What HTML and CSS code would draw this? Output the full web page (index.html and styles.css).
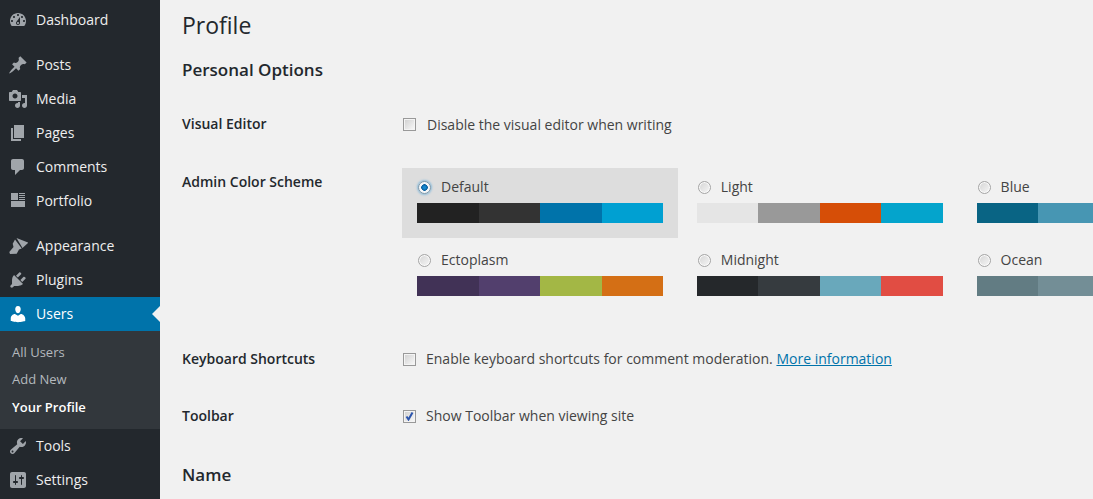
FILE: index.html
```html
<!DOCTYPE html>
<html lang="en">

<head>
    <meta charset="UTF-8">
    <meta name="viewport" content="width=device-width, initial-scale=1.0">
    <title>Profile</title>
    <link rel="stylesheet" href="styles.css">
</head>

<body>
    <nav class="sidebar">
        <ul class="menu">
            <li class="menu-item"><svg class="icon" viewBox="0 0 20 20"><path fill-rule="evenodd" d="M3.76 16h12.48c1.1-1.37 1.76-3.11 1.76-5 0-4.42-3.58-8-8-8s-8 3.58-8 8c0 1.89.66 3.63 1.76 5zM10 4c.55 0 1 .45 1 1s-.45 1-1 1-1-.45-1-1 .45-1 1-1zM6 6c.55 0 1 .45 1 1s-.45 1-1 1-1-.45-1-1 .45-1 1-1zm8 0c.55 0 1 .45 1 1s-.45 1-1 1-1-.45-1-1 .45-1 1-1zm-5.37 5.55L12 7v6c0 1.1-.9 2-2 2s-2-.9-2-2c0-.57.24-1.08.63-1.45zM4 10c.55 0 1 .45 1 1s-.45 1-1 1-1-.45-1-1 .45-1 1-1zm12 0c.55 0 1 .45 1 1s-.45 1-1 1-1-.45-1-1 .45-1 1-1zm-5 3c0-.55-.45-1-1-1s-1 .45-1 1 .45 1 1 1 1-.45 1-1z"/></svg>Dashboard</li>
            <li class="menu-sep"></li>
            <li class="menu-item"><svg class="icon" viewBox="0 0 20 20"><path d="M10.44 3.02l1.82-1.82 6.36 6.35-1.83 1.82c-1.05-.68-2.48-.57-3.41.36l-.75.75c-.92.93-1.04 2.35-.35 3.41l-1.83 1.82-2.41-2.41-2.8 2.79c-.42.42-3.38 2.71-3.8 2.29s1.86-3.39 2.28-3.81l2.79-2.79L4.1 9.36l1.83-1.82c1.05.69 2.48.57 3.4-.36l.75-.75c.93-.92 1.05-2.35.36-3.41z"/></svg>Posts</li>
            <li class="menu-item"><svg class="icon" viewBox="0 0 20 20"><path fill-rule="evenodd" d="M13 11V4c0-.55-.45-1-1-1h-1.67L9 1H5L3.67 3H2c-.55 0-1 .45-1 1v7c0 .55.45 1 1 1h10c.55 0 1-.45 1-1zM7 4.5c1.38 0 2.5 1.12 2.5 2.5S8.38 9.5 7 9.5 4.5 8.38 4.5 7 5.62 4.5 7 4.5zM14 6h5v10.5c0 1.38-1.12 2.5-2.5 2.5S14 17.88 14 16.5s1.12-2.5 2.5-2.500c.17 0 .34.02.5.05V9h-3V6zm-4 8.05V13h2v3.500c0 1.38-1.12 2.5-2.500 2.500S7 17.88 7 16.500 8.120 14 9.500 14c.17 0 .34.020.5.050z"/></svg>Media</li>
            <li class="menu-item"><svg class="icon" viewBox="0 0 20 20"><path d="M6 15V2h10v13H6zm-1 1h8v2H3V5h2v11z"/></svg>Pages</li>
            <li class="menu-item"><svg class="icon" viewBox="0 0 20 20"><path d="M5 2h9c1.1 0 2 .9 2 2v7c0 1.100-.9 2-2 2h-2l-5 5v-5H5c-1.100 0-2-.9-2-2V4c0-1.100.9-2 2-2z"/></svg>Comments</li>
            <li class="menu-item"><svg class="icon" viewBox="0 0 20 20"><path d="M3 2h7v7H3zM11 2h6v1h-6zM11 4h6v1h-6zM11 6h6v1h-6zM11 8h6v1h-6zM3 10h14v6H3z"/></svg>Portfolio</li>
            <li class="menu-sep"></li>
            <li class="menu-item"><svg class="icon" viewBox="0 0 20 20"><path d="M8.500 2l11.800 4.700-5.800 5.300zM7 3.500l6.800 9-2.800 1-2.300 4.200-6.700.3-.7-2 4.200-5-.8-3.300z"/></svg>Appearance</li>
            <li class="menu-item"><svg class="icon" viewBox="0 0 20 20"><path d="M13.11 4.36L9.87 7.6 8 5.73l3.24-3.24c.35-.34 1.05-.2 1.56.32.52.51.66 1.21.31 1.55zm-8 1.77l.91-1.12 9.01 9.01-1.190.84c-.71.71-2.630 1.160-3.820 1.160H6.140L4.900 17.260c-.59.59-1.540.59-2.120 0-.59-.58-.59-1.530 0-2.120l1.240-1.240v-3.880c0-1.130.4-3.050 1.090-3.890zm7.260 3.970l3.240-3.240c.34-.35 1.040-.21 1.550.31.52.51.66 1.210.31 1.550l-3.240 3.250z"/></svg>Plugins</li>
            <li class="menu-item current"><svg class="icon" viewBox="0 0 20 20"><path d="M10 9.25c-2.270 0-2.730-3.440-2.730-3.440C7 4.020 7.820 2 9.970 2c2.160 0 2.980 2.020 2.710 3.810 0 0-.41 3.440-2.680 3.440zm0 2.570L12.720 10c2.390 0 4.520 2.330 4.520 4.530v2.490s-3.650 1.130-7.240 1.130c-3.650 0-7.240-1.130-7.240-1.130v-2.490c0-2.250 1.940-4.480 4.150-4.480z"/></svg>Users</li>
            <li>
                <ul class="submenu">
                    <li>All Users</li>
                    <li>Add New</li>
                    <li class="active">Your Profile</li>
                </ul>
            </li>
            <li class="menu-item"><svg class="icon" viewBox="0 0 20 20"><path fill-rule="evenodd" d="M16.68 9.77c-1.34 1.34-3.3 1.67-4.95.99l-5.41 6.52c-.99.99-2.59.99-3.58 0s-.99-2.59 0-3.57l6.52-5.42c-.68-1.65-.35-3.61.99-4.95 1.28-1.28 3.12-1.62 4.72-1.06l-2.89 2.89 2.82 2.82 2.86-2.87c.53 1.58.18 3.4-1.08 4.65zM3.81 16.21c.4.39 1.04.39 1.43 0 .4-.4.4-1.04 0-1.43-.39-.4-1.03-.4-1.43 0-.39.39-.39 1.03 0 1.43z"/></svg>Tools</li>
            <li class="menu-item"><svg class="icon" viewBox="0 0 20 20"><path fill-rule="evenodd" d="M18 16V4c0-1.100-.9-2-2-2H4c-1.100 0-2 .9-2 2v12c0 1.100.9 2 2 2h12c1.100 0 2-.9 2-2zM8 11h1c.55 0 1 .45 1 1s-.45 1-1 1H8v1.500c0 .28-.22.5-.5.5s-.5-.22-.5-.5V13H6c-.55 0-1-.45-1-1s.45-1 1-1h1V5.500c0-.28.22-.5.5-.5s.5.22.5.5V11zm5-2h-1c-.55 0-1-.45-1-1s.45-1 1-1h1V5.500c0-.28.22-.5.5-.5s.5.22.5.5V7h1c.55 0 1 .45 1 1s-.45 1-1 1h-1v5.500c0 .28-.22.5-.5.5s-.5-.22-.5-.5V9z"/></svg>Settings</li>
        </ul>
    </nav>

    <main class="content">
        <h1>Profile</h1>
        <h2 class="section-title">Personal Options</h2>

        <div class="form-row row-editor">
            <div class="row-label">Visual Editor</div>
            <label class="check-line wide"><span class="checkbox"></span>Disable the visual editor when writing</label>
        </div>

        <div class="form-row row-scheme">
            <div class="row-label">Admin Color Scheme</div>
            <div class="scheme-grid">
                <div class="scheme selected">
                    <div class="scheme-name"><span class="radio on"></span>Default</div>
                    <div class="swatches"><i class="c222"></i><i class="c333"></i><i class="c0073aa"></i><i class="c00a0d2"></i></div>
                </div>
                <div class="scheme">
                    <div class="scheme-name"><span class="radio"></span>Light</div>
                    <div class="swatches"><i class="ce5e5e5"></i><i class="c999"></i><i class="cd64e07"></i><i class="c04a4cc"></i></div>
                </div>
                <div class="scheme">
                    <div class="scheme-name"><span class="radio"></span>Blue</div>
                    <div class="swatches"><i class="c096484"></i><i class="c4796b3"></i><i class="c52accc"></i><i class="c74b6ce"></i></div>
                </div>
                <div class="scheme">
                    <div class="scheme-name"><span class="radio"></span>Ectoplasm</div>
                    <div class="swatches"><i class="c413256"></i><i class="c523f6d"></i><i class="ca3b745"></i><i class="cd46f15"></i></div>
                </div>
                <div class="scheme">
                    <div class="scheme-name"><span class="radio"></span>Midnight</div>
                    <div class="swatches"><i class="c25282b"></i><i class="c363b3f"></i><i class="c69a8bb"></i><i class="ce14d43"></i></div>
                </div>
                <div class="scheme">
                    <div class="scheme-name"><span class="radio"></span>Ocean</div>
                    <div class="swatches"><i class="c627c83"></i><i class="c738e96"></i><i class="c9ebaa0"></i><i class="caa9d88"></i></div>
                </div>
            </div>
        </div>

        <div class="form-row row-keys">
            <div class="row-label">Keyboard Shortcuts</div>
            <label class="check-line"><span class="checkbox"></span>Enable keyboard shortcuts for comment moderation.&nbsp;<a href="#">More information</a></label>
        </div>

        <div class="form-row row-toolbar">
            <div class="row-label">Toolbar</div>
            <label class="check-line"><span class="checkbox"><svg viewBox="0 0 9 9"><path d="M1.500 4.500l2 3L7.500 .5" fill="none" stroke="#2c55ad" stroke-width="2"/></svg></span>Show Toolbar when viewing site</label>
        </div>

        <h2 class="section-title name-title">Name</h2>
    </main>
</body>

</html>
```

FILE: styles.css
```css
* {
    box-sizing: border-box;
}

html, body {
    height: 100%;
}

body {
    margin: 0;
    display: flex;
    overflow: hidden;
    background-color: #f1f1f1;
    color: #444;
    font-family: "Open Sans", sans-serif;
    font-size: 14px;
    line-height: 20px;
}

ul {
    list-style: none;
    margin: 0;
    padding: 0;
}

/* sidebar */
.sidebar {
    flex: 0 0 160px;
    background-color: #23282d;
    padding-top: 3px;
}

.menu-item {
    display: flex;
    align-items: center;
    height: 34px;
    padding-left: 8px;
    color: #eee;
}

.menu-sep {
    height: 11px;
}

.icon {
    width: 20px;
    height: 20px;
    margin-right: 8px;
    fill: #a0a5aa;
}

.menu-item.current {
    position: relative;
    background-color: #0073aa;
    color: #fff;
}

.menu-item.current .icon {
    fill: #fff;
}

.menu-item.current::after {
    content: "";
    position: absolute;
    right: 0;
    top: 9px;
    border: 8px solid transparent;
    border-right-color: #f1f1f1;
    border-left-width: 0;
}

.submenu {
    height: 98px;
    padding: 8px 0 0 12px;
    background-color: #32373c;
    color: #b4b9be;
    font-size: 13px;
}

.submenu li {
    height: 27px;
    line-height: 27px;
}

.submenu .active {
    margin-top: 1px;
    color: #fff;
    font-weight: 600;
}

/* content */
.content {
    flex: 1;
    min-width: 0;
    padding-left: 22px;
}

h1 {
    margin: 11px 0 0;
    color: #23282d;
    font-size: 23px;
    font-weight: 400;
    line-height: 29px;
}

.section-title {
    margin: 0;
    color: #23282d;
    font-size: 17px;
    font-weight: 600;
    line-height: 24px;
}

.content > .section-title {
    margin-top: 18px;
}

.form-row {
    display: flex;
}

.row-label {
    flex: 0 0 220px;
    color: #23282d;
    font-weight: 600;
}

.row-editor {
    margin-top: 32px;
}

.row-scheme {
    margin-top: 32px;
}

.row-scheme .row-label {
    margin-top: 4px;
}

.row-keys {
    margin-top: 38px;
}

.row-toolbar {
    margin-top: 37px;
}

.content > .name-title {
    margin-top: 37px;
}

.check-line {
    display: flex;
    align-items: center;
    height: 20px;
    white-space: nowrap;
}

.check-line a {
    color: #0073aa;
}

.checkbox {
    flex: none;
    width: 13px;
    height: 13px;
    margin: 0 10px 0 1px;
    border: 1px solid #999;
    background: linear-gradient(135deg, #cfcfcf, #fafafa);
    box-shadow: inset 0 0 0 1px #f4f4f4;
}

.checkbox svg {
    display: block;
    padding: 1px;
}

.wide {
    height: 22px;
}

.wide .checkbox {
    margin: 0 11px 2px 1px;
}

/* color schemes */
.scheme-grid {
    display: grid;
    grid-template-columns: repeat(3, 276px);
    gap: 3px 3.8px;
    flex: 1;
    min-width: 0;
    overflow: hidden;
}

.scheme {
    height: 70px;
    padding: 9px 15px 0;
}

.scheme.selected {
    background-color: #ddd;
}

.scheme-name {
    display: flex;
    align-items: center;
    height: 20px;
}

.radio {
    flex: none;
    width: 13px;
    height: 13px;
    margin: 0 10px 0 1px;
    border: 1px solid #a5a5a5;
    border-radius: 50%;
    background: linear-gradient(135deg, #d4d4d4, #f6f6f6);
    box-shadow: inset 0 0 0 1px #fafafa;
}

.radio.on {
    border-color: #7d98aa;
    background: radial-gradient(circle, #1488d0 0 1px, #0a5f9e 3px, #f4f6f8 3.6px);
    box-shadow: 0 0 2px 1px #8fbedc;
}

.swatches {
    display: flex;
    width: 246px;
    height: 20px;
    margin-top: 6px;
}

.swatches i {
    flex: 1;
}

.c222 { background-color: #222; }
.c333 { background-color: #333; }
.c0073aa { background-color: #0073aa; }
.c00a0d2 { background-color: #00a0d2; }
.ce5e5e5 { background-color: #e5e5e5; }
.c999 { background-color: #999; }
.cd64e07 { background-color: #d64e07; }
.c04a4cc { background-color: #04a4cc; }
.c096484 { background-color: #096484; }
.c4796b3 { background-color: #4796b3; }
.c52accc { background-color: #52accc; }
.c74b6ce { background-color: #74b6ce; }
.c413256 { background-color: #413256; }
.c523f6d { background-color: #523f6d; }
.ca3b745 { background-color: #a3b745; }
.cd46f15 { background-color: #d46f15; }
.c25282b { background-color: #25282b; }
.c363b3f { background-color: #363b3f; }
.c69a8bb { background-color: #69a8bb; }
.ce14d43 { background-color: #e14d43; }
.c627c83 { background-color: #627c83; }
.c738e96 { background-color: #738e96; }
.c9ebaa0 { background-color: #9ebaa0; }
.caa9d88 { background-color: #aa9d88; }
```
